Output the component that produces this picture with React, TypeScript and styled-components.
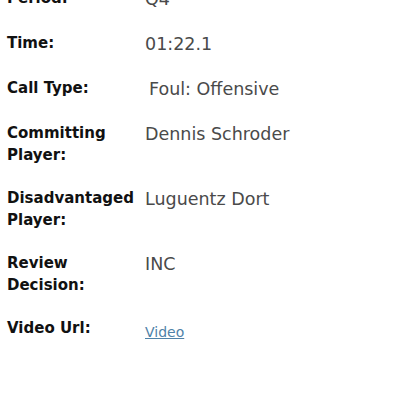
import React from "react";
import styled, { createGlobalStyle } from "styled-components";

const GlobalStyle = createGlobalStyle`
  html, body {
    margin: 0;
    padding: 0;
    background: #fff;
    overflow: hidden;
  }
`;

const Details = styled.div`
  margin-top: -13px;
  padding-left: 7px;
  display: grid;
  grid-template-columns: 138px 1fr;
  row-gap: 21px;
  font-family: "DejaVu Sans", sans-serif;
`;

const Label = styled.div`
  font-size: 15px;
  font-weight: 700;
  line-height: 22px;
  color: #111;
`;

const Value = styled.div<{ $indent?: boolean }>`
  font-size: 17.5px;
  line-height: 24px;
  color: #4a4a4a;
  padding-left: ${(p) => (p.$indent ? "4px" : "0")};
`;

const VideoLink = styled.a`
  font-size: 14px;
  color: #4f82a8;
  text-decoration: underline;
  position: relative;
  top: 2px;
`;

const rows = [
  { label: "Period:", value: "Q4" },
  { label: "Time:", value: "01:22.1" },
  { label: "Call Type:", value: "Foul: Offensive", indent: true },
  { label: "Committing Player:", value: "Dennis Schroder" },
  { label: "Disadvantaged Player:", value: "Luguentz Dort" },
  { label: "Review Decision:", value: "INC" },
];

const App: React.FC = () => {
  return (
    <>
      <GlobalStyle />
      <Details>
        {rows.map((r) => (
          <React.Fragment key={r.label}>
            <Label>{r.label}</Label>
            <Value $indent={r.indent}>{r.value}</Value>
          </React.Fragment>
        ))}
        <Label>Video Url:</Label>
        <Value>
          <VideoLink href="#">Video</VideoLink>
        </Value>
      </Details>
    </>
  );
};

export default App;
